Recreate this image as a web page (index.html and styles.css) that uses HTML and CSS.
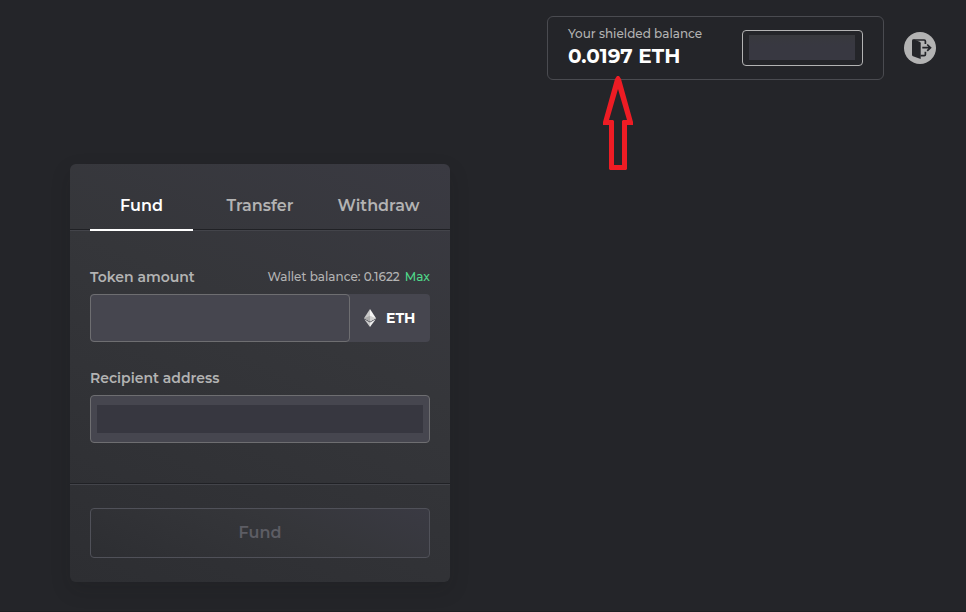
FILE: index.html
```
<!DOCTYPE html>
<html lang="en">
<head>
<meta charset="utf-8">
<title>Shielded balance</title>
<link rel="stylesheet" href="styles.css">
</head>
<body>
<div class="page">
  <header class="header">
    <div class="account">
      <div class="balance">
        <span class="balance-label">Your shielded balance</span>
        <strong class="balance-value">0.0197 ETH</strong>
      </div>
      <div class="address"><span class="address-mask"></span></div>
    </div>
    <button class="logout" aria-label="Log out">
      <svg width="32" height="32" viewBox="0 0 32 32">
        <circle cx="16" cy="16" r="16" fill="#b3b3b3"/>
        <path d="M9.500 7.200l6.200 2.600q1 .5 1 1.400V27L9 24.300Q8 23.900 8 22.800V8.500Q8 7.200 9.500 7.200Z" fill="#242529"/>
        <path d="M9.500 8h10.700q1.200 0 1.200 1.200V12M16.500 23.700h3.700q1.200 0 1.200-1.200V19.800M18.300 15.700h8M23.200 12.500l3.300 3.200-3.300 3.200" fill="none" stroke="#242529" stroke-width="1.700"/>
      </svg>
    </button>
    <svg class="pointer" width="32" height="96" viewBox="0 0 32 96">
      <path fill-rule="evenodd" fill="#ee1c24" d="M15 1h2l2 3L31 47v3H25V94l-1 1H8l-1-1V50H1V47L13 4ZM16 14L7 45h4l1 1V90h8V46l1-1h4Z"/>
    </svg>
  </header>
  <main class="card">
    <nav class="tabs">
      <button class="tab active"><span>Fund</span></button>
      <button class="tab"><span>Transfer</span></button>
      <button class="tab"><span>Withdraw</span></button>
    </nav>
    <section class="form">
      <div class="row">
        <span class="label">Token amount</span>
        <span class="wallet"><span>Wallet balance: 0.1622</span><span class="max">Max</span></span>
      </div>
      <div class="amount">
        <div class="input"></div>
        <div class="coin">
          <svg width="12" height="18" viewBox="0 0 12 18">
            <path d="M6 0L0 9.200 6 12.500Z" fill="#c9c9c9"/>
            <path d="M6 0l6 9.200-6 3.300Z" fill="#f5f5f5"/>
            <path d="M0 9.200l6-2.400v5.700Z" fill="#aaa"/>
            <path d="M12 9.200L6 6.800v5.700Z" fill="#d0d0d0"/>
            <path d="M.3 10.200L6 13.500V18Z" fill="#ccc"/>
            <path d="M11.700 10.200L6 13.500V18Z" fill="#eee"/>
          </svg>
          <span>ETH</span>
        </div>
      </div>
      <div class="row second"><span class="label">Recipient address</span></div>
      <div class="recipient-input"><span></span></div>
    </section>
    <footer class="footer"><button class="submit"><span>Fund</span></button></footer>
  </main>
</div>
</body>
</html>
```
FILE: styles.css
```
* { box-sizing: border-box; }
body { margin: 0; background: #242529; color: #b3b3b3; font-family: Montserrat, Inter, sans-serif; }
button { margin: 0; padding: 0; border: 0; background: none; color: inherit; font: inherit; }
svg { display: block; }
span, strong { white-space: nowrap; }
.page { height: 612px; padding: 16px 30px 0 70px; border-bottom: 1px solid #1d1e22; overflow: hidden; }
.header { position: relative; display: flex; justify-content: flex-end; align-items: center; gap: 20px; height: 64px; }
.account { display: flex; align-items: center; justify-content: space-between; width: 337px; height: 64px; padding: 0 20px; border: 1px solid #4a4b50; border-radius: 6px; }
.balance { display: flex; flex-direction: column; padding-bottom: 1px; }
.balance-label { font-size: 12px; font-weight: 500; line-height: 18px; }
.balance-value { font-size: 20px; line-height: 27px; color: #fff; font-weight: 700; }
.address { width: 121px; height: 36px; padding: 4px 7px 5px 6px; border: 1px solid #b3b3b3; border-radius: 4px; }
.address-mask { display: block; width: 106px; height: 25px; background: linear-gradient(#38393d, #383841 40%); }
.pointer { position: absolute; left: 532px; top: 59px; }
.card { width: 380px; height: 418px; margin-top: 84px; border-radius: 6px; background: linear-gradient(25deg, #2d2e32, #35363a 60%, #3a3a42); box-shadow: 0 8px 20px rgba(20, 20, 23, .15); }
.tabs { display: flex; justify-content: space-between; height: 67px; padding: 0 20px; border-bottom: 1px solid #43444a; box-shadow: inset 0 -1px #202125; }
.tab { width: 103px; height: 67px; padding-top: 18px; font-size: 16px; font-weight: 600; border-bottom: 2px solid transparent; }
.tab.active { color: #fff; border-color: #fff; }
.form { height: 254px; padding: 36px 20px 0; border-bottom: 1px solid #43444a; box-shadow: inset 0 -1px #202125; }
.row { display: flex; justify-content: space-between; align-items: center; height: 20px; }
.label { font-size: 14px; font-weight: 600; }
.wallet { display: flex; gap: 5px; margin-top: -1px; font-size: 12px; font-weight: 500; }
.max { color: #4fd98a; }
.amount { display: flex; height: 48px; margin-top: 7px; border-radius: 4px; background: #46464f; }
.input { width: 260px; border: 1px solid #6e6e71; border-radius: 4px; }
.coin { display: flex; align-items: center; gap: 10px; padding-left: 14px; color: #fff; font-size: 14px; font-weight: 700; }
.second { margin-top: 26px; }
.recipient-input { height: 48px; margin-top: 7px; padding: 9px 6px; border: 1px solid #6e6e71; border-radius: 4px; background: #46464f; }
.recipient-input span { display: block; height: 28px; background: #373740; }
.footer { padding: 23px 20px; }
.submit { width: 340px; height: 50px; padding-bottom: 2px; border: 1px solid #505159; border-radius: 4px; color: #5d5d64; font-size: 16px; font-weight: 600; background: linear-gradient(25deg, #2d2e32, #35363a 60%, #3a3a43); }
```
